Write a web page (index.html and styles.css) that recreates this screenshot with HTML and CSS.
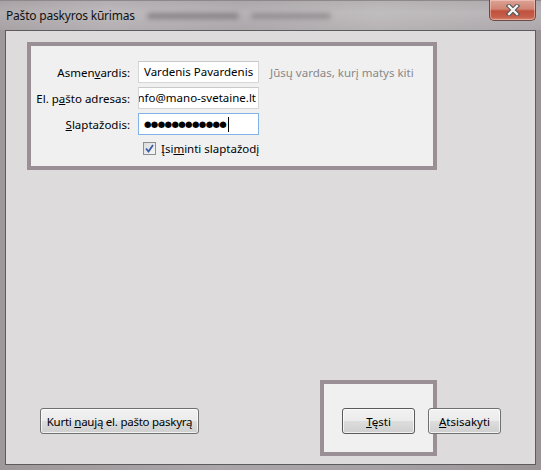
FILE: index.html
```html
<!DOCTYPE html>
<html lang="lt">
<head>
<meta charset="utf-8">
<title>Pašto paskyros kūrimas</title>
<link rel="stylesheet" href="styles.css">
</head>
<body>
<div class="window">
  <div class="titlebar">
    <span class="title">Pašto paskyros kūrimas</span>
    <span class="smudge s1"></span>
    <span class="smudge s2"></span>
    <span class="spacer"></span>
    <button class="close" aria-label="Uždaryti">
      <svg width="18" height="12" viewBox="0 0 18 12">
        <path d="M5 2 L13 10 M13 2 L5 10" stroke="#505050" stroke-width="4.4" stroke-linecap="square" fill="none"/>
        <path d="M5 2 L13 10 M13 2 L5 10" stroke="#f4f4f4" stroke-width="2.4" stroke-linecap="square" fill="none"/>
      </svg>
    </button>
  </div>
  <div class="client">
    <div class="formbox">
      <div class="grid">
        <label class="lbl">Asmen<u>v</u>ardis:</label>
        <div class="input">Vardenis Pavardenis</div>
        <span class="hint">Jūsų vardas, kurį matys kiti</span>

        <label class="lbl">El. p<u>a</u>što adresas:</label>
        <div class="input clip"><span class="scrolled">info@mano-svetaine.lt</span></div>
        <span></span>

        <label class="lbl"><u>S</u>laptažodis:</label>
        <div class="input focus"><span class="dots">●●●●●●●●●●●●</span><span class="caret"></span></div>
        <span></span>

        <span></span>
        <div class="check">
          <span class="cbox">
            <svg width="11" height="11" viewBox="0 0 11 11"><path d="M2 5.5 L4.5 8.5 L9 2" stroke="#3b5aa8" stroke-width="1.8" fill="none"/></svg>
          </span>
          <span class="cl">Įsi<u>m</u>inti slaptažodį</span>
        </div>
      </div>
    </div>
    <div class="fill"></div>
    <div class="actions">
      <button class="btn wide">Kurti <u>n</u>aują el. pašto paskyrą</button>
      <span class="spacer"></span>
      <button class="btn primary"><u>T</u>ęsti</button>
      <button class="btn"><u>A</u>tsisakyti</button>
      <div class="highlight"></div>
    </div>
  </div>
</div>
</body>
</html>
```
FILE: styles.css
```css
html, body {
  margin: 0;
  padding: 0;
}
body {
  width: 541px;
  height: 470px;
  overflow: hidden;
  font-family: "Segoe UI", "Noto Sans", "Open Sans", sans-serif;
  font-size: 11.5px;
  color: #000;
}
.window {
  width: 541px;
  height: 470px;
  display: flex;
  flex-direction: column;
  background: linear-gradient(90deg, #9e989b 0%, #aaa5a8 40%, #a6a1a4 70%, #9a9497 100%);
  box-sizing: border-box;
}
.titlebar {
  height: 30px;
  display: flex;
  align-items: flex-start;
  padding-left: 6px;
  padding-right: 5px;
  box-sizing: border-box;
  background:
    linear-gradient(180deg, rgba(255,255,255,0.05) 0%, rgba(255,255,255,0.18) 40%, rgba(255,255,255,0.05) 100%),
    linear-gradient(90deg, #a29c9f 0%, #b0abae 20%, #a7a2a5 45%, #b3afb1 70%, #a8a3a6 100%);
  border-top: 1px solid #8e888b;
}
.title {
  margin-top: 7px;
  line-height: 16px;
  font-size: 12px;
  color: #111;
  white-space: nowrap;
  letter-spacing: -0.2px;
}
.smudge {
  display: inline-block;
  height: 6px;
  margin-top: 12px;
  background: #7d787b;
  filter: blur(2.5px);
  opacity: 0.8;
  border-radius: 3px;
}
.s1 { width: 92px; margin-left: 12px; }
.s2 { width: 80px; margin-left: 12px; opacity: 0.6; }
.spacer { flex: 1; }
.close {
  width: 47px;
  height: 21px;
  margin-top: -1px;
  padding: 0;
  border: 1px solid #6a4a46;
  border-top: none;
  border-radius: 0 0 5px 5px;
  background: linear-gradient(180deg, #dca295 0%, #cf8573 45%, #c0513e 55%, #c6604b 85%, #d7846d 100%);
  box-shadow: inset 0 0 0 1px rgba(255,220,210,0.45);
  display: flex;
  align-items: center;
  justify-content: center;
}
.client {
  flex: 1;
  margin: 0 5px 5px 5px;
  border: 1px solid #5c5c5c;
  background: #dddbdc;
  display: flex;
  flex-direction: column;
  position: relative;
}
.formbox {
  margin: 11px 0 0 21px;
  width: 402px;
  height: 120px;
  border: 4px solid #998f94;
  background: #f0f0f0;
  box-sizing: content-box;
}
.grid {
  display: grid;
  grid-template-columns: 99px 121px auto;
  column-gap: 8px;
  row-gap: 4px;
  padding-top: 15px;
  align-items: center;
}
.lbl {
  text-align: right;
  white-space: nowrap;
  color: #000;
}
.input {
  height: 22px;
  box-sizing: border-box;
  border: 1px solid #d6d6d6;
  border-top-color: #c9c9c9;
  background: #fff;
  padding: 0 0 0 5px;
  line-height: 20px;
  white-space: nowrap;
  overflow: hidden;
}
.input.clip {
  padding-left: 0;
  display: flex;
  justify-content: flex-end;
  padding-right: 2px;
}
.input.focus {
  border-color: #7eb4ea;
  display: flex;
  align-items: center;
}
.dots {
  font-family: "DejaVu Sans", sans-serif;
  font-size: 8.6px;
  letter-spacing: -0.65px;
  line-height: 20px;
}
.caret {
  width: 1px;
  height: 15px;
  background: #000;
  margin-left: 2px;
}
.hint {
  color: #888888;
  margin-left: 3px;
  white-space: nowrap;
}
.check {
  grid-column: 2 / span 2;
  display: flex;
  align-items: center;
  gap: 5px;
  height: 19px;
  padding-left: 5px;
  white-space: nowrap;
}
.cbox {
  width: 11px;
  height: 11px;
  flex: none;
  border: 1px solid #8e8f8f;
  background: linear-gradient(135deg, #dcdcdc, #f6f6f6);
  display: flex;
  align-items: center;
  justify-content: center;
}
.fill { flex: 1; }
.actions {
  position: relative;
  display: flex;
  align-items: center;
  padding: 0 34px 30px 34px;
}
.btn {
  height: 26px;
  padding: 0 4px;
  font-family: inherit;
  font-size: 11.5px;
  white-space: nowrap;
  color: #000;
  border: 1px solid #707070;
  border-radius: 3px;
  background: linear-gradient(180deg, #f2f2f2 0%, #ebebeb 48%, #dddddd 52%, #cfcfcf 100%);
  box-shadow: inset 0 0 0 1px rgba(255,255,255,0.7);
  width: 73px;
  position: relative;
  z-index: 2;
}
.btn.wide { width: 159px; letter-spacing: -0.25px; }
.btn.primary { margin-right: 13px; border-color: #5a5a5a; }
.highlight {
  position: absolute;
  left: 314px;
  top: -28px;
  width: 109px;
  height: 68px;
  border: 4px solid #998f94;
  background: #f0f0f0;
  z-index: 1;
}
```
